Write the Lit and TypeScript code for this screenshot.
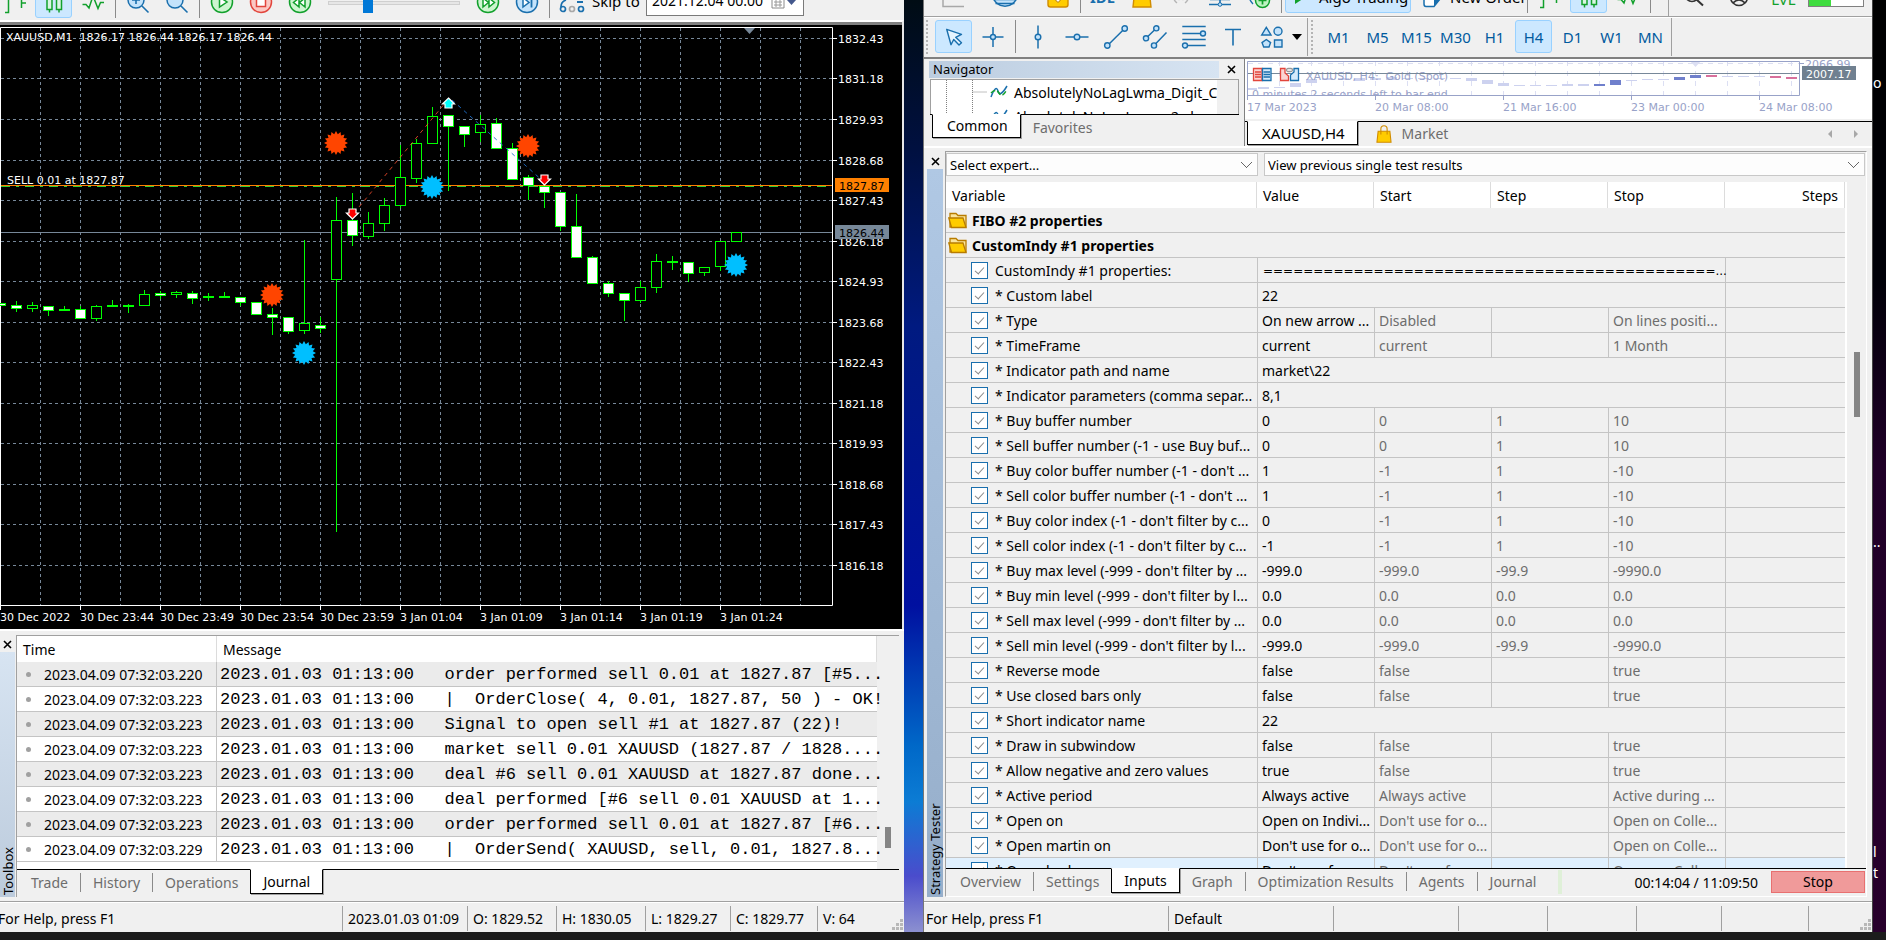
import { LitElement, html, svg, css } from "lit";
import { customElement } from "lit/decorators.js";

/* ---------- data ---------- */

type Candle = [x: number, high: number, top: number, bottom: number, low: number, kind: "w" | "h" | "l"];

const CANDLES: Candle[] = [
  [0, 303, 303, 305, 305, "w"], [16, 301, 305, 308, 311, "w"], [32, 302, 305, 308, 311, "h"],
  [48, 306, 306, 310, 315, "w"], [64, 306, 309, 310, 310, "l"], [80, 306, 309, 318, 318, "w"],
  [96, 305, 306, 318, 320, "h"], [112, 300, 305, 306, 306, "l"], [128, 304, 305, 306, 312, "l"],
  [144, 290, 294, 305, 305, "h"], [160, 291, 293, 295, 298, "w"], [176, 291, 292, 294, 297, "h"],
  [192, 291, 293, 298, 303, "w"], [208, 293, 296, 297, 300, "l"], [224, 292, 296, 297, 297, "l"],
  [240, 297, 297, 302, 305, "w"], [256, 302, 302, 314, 314, "w"], [272, 308, 314, 317, 334, "w"],
  [288, 317, 317, 331, 333, "w"], [304, 240, 323, 330, 333, "h"], [320, 317, 325, 328, 332, "w"],
  [336, 197, 220, 279, 531, "h"], [352, 193, 220, 235, 245, "w"], [368, 212, 223, 236, 238, "h"],
  [384, 198, 205, 223, 230, "h"], [400, 145, 177, 205, 207, "h"], [416, 139, 143, 178, 182, "h"],
  [432, 107, 116, 143, 143, "h"], [448, 115, 115, 126, 190, "w"], [464, 126, 126, 134, 146, "w"],
  [480, 115, 124, 132, 141, "h"], [496, 118, 123, 148, 148, "w"], [512, 143, 148, 179, 179, "w"],
  [528, 175, 177, 185, 199, "w"], [544, 186, 186, 192, 207, "w"], [560, 192, 192, 226, 230, "w"],
  [576, 194, 226, 257, 257, "w"], [592, 256, 257, 283, 283, "w"], [608, 281, 283, 293, 296, "w"],
  [624, 293, 293, 300, 320, "w"], [640, 281, 287, 300, 302, "h"], [656, 254, 261, 287, 292, "h"],
  [672, 256, 261, 262, 269, "l"], [688, 262, 262, 273, 281, "w"], [704, 267, 267, 272, 275, "h"],
  [720, 241, 241, 266, 270, "h"], [736, 232, 232, 241, 241, "h"],
];

const PRICES: [number, string][] = [
  [38, "1832.43"], [78, "1831.18"], [119, "1829.93"], [160, "1828.68"], [200, "1827.43"],
  [241, "1826.18"], [281, "1824.93"], [322, "1823.68"], [362, "1822.43"], [403, "1821.18"],
  [443, "1819.93"], [484, "1818.68"], [524, "1817.43"], [565, "1816.18"],
];

const TIMES: [number, string][] = [
  [0, "30 Dec 2022"], [80, "30 Dec 23:44"], [160, "30 Dec 23:49"], [240, "30 Dec 23:54"],
  [320, "30 Dec 23:59"], [400, "3 Jan 01:04"], [480, "3 Jan 01:09"], [560, "3 Jan 01:14"],
  [640, "3 Jan 01:19"], [720, "3 Jan 01:24"],
];

const LOG: [string, string][] = [
  ["2023.04.09 07:32:03.220", "order performed sell 0.01 at 1827.87 [#5..."],
  ["2023.04.09 07:32:03.223", "|  OrderClose( 4, 0.01, 1827.87, 50 ) - OK!"],
  ["2023.04.09 07:32:03.223", "Signal to open sell #1 at 1827.87 (22)!"],
  ["2023.04.09 07:32:03.223", "market sell 0.01 XAUUSD (1827.87 / 1828...."],
  ["2023.04.09 07:32:03.223", "deal #6 sell 0.01 XAUUSD at 1827.87 done..."],
  ["2023.04.09 07:32:03.223", "deal performed [#6 sell 0.01 XAUUSD at 1..."],
  ["2023.04.09 07:32:03.223", "order performed sell 0.01 at 1827.87 [#6..."],
  ["2023.04.09 07:32:03.229", "|  OrderSend( XAUUSD, sell, 0.01, 1827.8..."],
];

/* A row with one value spans the optimisation columns. */
const INPUTS: string[][] = [
  ["CustomIndy #1 properties:", "=".repeat(45) + "..."],
  ["* Custom label", "22"],
  ["* Type", "On new arrow ...", "Disabled", "", "On lines positi..."],
  ["* TimeFrame", "current", "current", "", "1 Month"],
  ["* Indicator path and name", "market\\22"],
  ["* Indicator parameters (comma separ...", "8,1"],
  ["* Buy buffer number", "0", "0", "1", "10"],
  ["* Sell buffer number (-1 - use Buy buf...", "0", "0", "1", "10"],
  ["* Buy color buffer number (-1 - don't ...", "1", "-1", "1", "-10"],
  ["* Sell color buffer number (-1 - don't ...", "1", "-1", "1", "-10"],
  ["* Buy color index (-1 - don't filter by c...", "0", "-1", "1", "-10"],
  ["* Sell color index (-1 - don't filter by c...", "-1", "-1", "1", "-10"],
  ["* Buy max level (-999 - don't filter by ...", "-999.0", "-999.0", "-99.9", "-9990.0"],
  ["* Buy min level (-999 - don't filter by l...", "0.0", "0.0", "0.0", "0.0"],
  ["* Sell max level (-999 - don't filter by ...", "0.0", "0.0", "0.0", "0.0"],
  ["* Sell min level (-999 - don't filter by l...", "-999.0", "-999.0", "-99.9", "-9990.0"],
  ["* Reverse mode", "false", "false", "", "true"],
  ["* Use closed bars only", "false", "false", "", "true"],
  ["* Short indicator name", "22"],
  ["* Draw in subwindow", "false", "false", "", "true"],
  ["* Allow negative and zero values", "true", "false", "", "true"],
  ["* Active period", "Always active", "Always active", "", "Active during ..."],
  ["* Open on", "Open on Indivi...", "Don't use for o...", "", "Open on Colle..."],
  ["* Open martin on", "Don't use for o...", "Don't use for o...", "", "Open on Colle..."],
  ["* Open hedge on", "Don't use for o...", "Don't use for o...", "", "Open on Colle..."],
];

/* ---------- icons, all on a 24 x 24 grid ---------- */

const B = "#1a6fad";
const L = "#c4e3fb";
const G = "#12a02c";

const ICONS: Record<string, unknown> = {
  bars: svg`<path d="M5.5 0V22.5H2M5.5 8H2M18.5 0V18M18.5 13H23" fill="none" stroke=${G} stroke-width="1.5"/>`,
  candles: svg`<path d="M7.5 0V22.5M17 0V22.5" stroke=${G} stroke-width="1.5"/><path d="M5 2H10V19.500H5ZM14.500 2H19.500V19.500H14.500Z" fill="#d9f5e2" stroke=${G} stroke-width="1.5"/>`,
  line: svg`<path d="M1.500 14.500H5L8 18L12 6L17 18.500L19.500 12.500H23" fill="none" stroke=${G} stroke-width="1.5"/>`,
  zoomin: svg`<circle cx="10" cy="10" r="8" fill=${L} stroke=${B} stroke-width="1.5"/><path d="M6 10H14M10 6V14M16 16L22.500 22.500" stroke=${B} stroke-width="1.600"/>`,
  zoomout: svg`<circle cx="10" cy="10" r="8" fill=${L} stroke=${B} stroke-width="1.5"/><path d="M6 8H14M16 16L22.500 22.500" stroke=${B} stroke-width="1.600"/>`,
  play: svg`<circle cx="12" cy="12" r="10.500" fill="#cdf5cf" stroke=${G} stroke-width="1.5"/><path d="M9.500 7L17 12L9.500 17Z" fill="#fff" stroke=${G} stroke-width="1.5"/>`,
  stop: svg`<circle cx="12" cy="12" r="10.500" fill="#fbc9c4" stroke="#e2453c" stroke-width="1.5"/><path d="M7.500 7.500H16.500V16.500H7.500Z" fill="#fff" stroke="#e2453c" stroke-width="1.5"/>`,
  rewind: svg`<circle cx="12" cy="12" r="10.500" fill="#cdf5cf" stroke=${G} stroke-width="1.5"/><path d="M11 8L5.500 12.500L11 17ZM17 8L11.500 12.500L17 17Z" fill="#fff" stroke=${G} stroke-width="1.5"/>`,
  forward: svg`<circle cx="12" cy="12" r="10.500" fill="#cdf5cf" stroke=${G} stroke-width="1.5"/><path d="M7 8L12.500 12.500L7 17ZM13 8L18.500 12.500L13 17Z" fill="#fff" stroke=${G} stroke-width="1.5"/>`,
  next: svg`<circle cx="12" cy="12" r="10.500" fill=${L} stroke=${B} stroke-width="1.5"/><path d="M8 7.500L14 12.500L8 17Z" fill="#fff" stroke=${B} stroke-width="1.5"/><path d="M16.500 7V17.500" stroke=${B} stroke-width="1.800"/>`,
  skip: svg`<g fill="none" stroke-width="1.700"><circle cx="3" cy="19" r="2.500" stroke=${B}/><circle cx="12" cy="19" r="2.500" stroke="#a8a8a8"/><circle cx="21" cy="19" r="2.500" stroke=${B}/><path d="M1 17C1 13 3 11 6 10" stroke=${B}/></g><path d="M17 12H23" stroke=${B} stroke-width="2"/>`,
  cursor: svg`<path d="M4.700 4.300L19.500 9.300L13.700 12.300L19.500 17.700L17 20L11.700 14.500L9 19.700Z" fill="#e6f4fe" stroke=${B} stroke-width="1.400" stroke-linejoin="round"/>`,
  cross: svg`<path d="M1.500 12H22.500M12 2V22" stroke=${B} stroke-width="1.500"/><circle cx="12" cy="12" r="2.500" fill=${L} stroke=${B} stroke-width="1.400"/>`,
  vline: svg`<path d="M12 .500V23.500" stroke=${B} stroke-width="1.500"/><circle cx="12" cy="12" r="2.800" fill=${L} stroke=${B} stroke-width="1.400"/>`,
  hline: svg`<path d="M.500 12H23.500" stroke=${B} stroke-width="1.500"/><circle cx="12" cy="12" r="2.800" fill=${L} stroke=${B} stroke-width="1.400"/>`,
  trend: svg`<path d="M3.300 20.700L20.700 3.500" stroke=${B} stroke-width="1.500"/><g fill=${L} stroke=${B} stroke-width="1.400"><circle cx="3.300" cy="20.500" r="2.700"/><circle cx="20.700" cy="3.500" r="2.700"/></g>`,
  channel: svg`<path d="M3 13.300L13.300 3.300M11 20.500L23.500 7.500" stroke=${B} stroke-width="1.500"/><g fill=${L} stroke=${B} stroke-width="1.400"><circle cx="3" cy="13.300" r="2.600"/><circle cx="13.300" cy="3.300" r="2.600"/><circle cx="11" cy="20.500" r="2.600"/></g>`,
  fibo: svg`<path d="M.300 1.500H23.700M.300 8.500H19M.300 14.500H23.700M5 20.500H23.700" stroke=${B} stroke-width="1.500"/><g fill=${L} stroke=${B} stroke-width="1.400"><circle cx="21" cy="8.500" r="2.500"/><circle cx="3" cy="20.500" r="2.500"/></g>`,
  text: svg`<path d="M4 4.500H20M12 4.500V20.500" stroke=${B} stroke-width="1.600"/>`,
  shapes: svg`<g fill=${L} stroke=${B} stroke-width="1.400"><path d="M6.300 2.300L1.700 10H11ZM6.300 14.500L10.600 17.600L9 22H3.700L2 17.600ZM14.500 15H22V22H14.500Z"/><circle cx="18" cy="6.300" r="4"/></g>`,
  axes: svg`<path d="M2 0V21.500H23" fill="none" stroke="#a8a8a8" stroke-width="1.500"/>`,
  globe: svg`<path d="M0 10C1 25 23 25 24 10Z" fill=${L} stroke=${B} stroke-width="1.500"/><path d="M0 14.500H24M2.500 18.500H21.500" stroke=${B} stroke-width="1.500"/>`,
  folder: svg`<rect x="2" y="1" width="20" height="21" rx="2.500" fill="#fc0" stroke="#d08c00" stroke-width="1.400"/><path d="M8.500 14L12 17.500L15.500 14Z" fill="#fff" stroke="#a87000"/>`,
  bag: svg`<path d="M4.500 8H19.500L21 22H3Z" fill="#fc0" stroke="#d08c00" stroke-width="1.400"/><path d="M8 12V5a4 4 0 0 1 8 0V12" fill="none" stroke="#d08c00" stroke-width="1.400"/>`,
  signal: svg`<path d="M4 9Q4 15 8 18M20 9Q20 15 16 18M9 10Q9 13 10.500 15M15 10Q15 13 13.500 15" fill="none" stroke="#b4b4b4" stroke-width="1.400"/>`,
  vps: svg`<path d="M2 14.500H22M1 19.500H23M12 14.500V19.500" stroke=${B} stroke-width="1.600"/><circle cx="12" cy="19.500" r="1.800" fill=${L} stroke=${B}/>`,
  add: svg`<path d="M1 8Q2 15 6 19M6 8Q7 12 9 14" fill="none" stroke=${B} stroke-width="1.400"/><circle cx="15.500" cy="15.500" r="7" fill="#bdf3c1" stroke=${G} stroke-width="1.500"/><path d="M11.500 15.500H19.500M15.500 11.500V19.500" stroke=${G} stroke-width="1.700"/>`,
  order: svg`<path d="M3 2H20V14L14 21.500H6Q4 21.500 4 19V2" fill="#fff" stroke=${B} stroke-width="1.500"/><path d="M20 14H14V21.500Z" fill=${B}/>`,
  search: svg`<circle cx="10" cy="10" r="6.500" fill="none" stroke="#333" stroke-width="1.700"/><path d="M14.500 14.500L21 20.500" stroke="#333" stroke-width="2"/>`,
  user: svg`<circle cx="12" cy="12" r="8.500" fill="none" stroke="#333" stroke-width="1.600"/><path d="M6 18Q12 12 18 18" fill="none" stroke="#333" stroke-width="1.600"/>`,
};

const icon = (name: string) =>
  html`<svg class="icon" width="24" height="24" viewBox="0 0 24 24" overflow="visible" aria-hidden="true">${ICONS[name]}</svg>`;

const tool = (name: string, label: string, on = false) =>
  html`<button class="tool ${on ? "on" : ""}" aria-label=${label}>${icon(name)}</button>`;

const sep = html`<span class="sep"></span>`;

const cross = html`<svg width="9" height="9" viewBox="0 0 9 9" aria-hidden="true"><path d="M1 1L8 8M8 1L1 8" stroke="#000" stroke-width="1.600"/></svg>`;

const sizeGrip = html`<svg class="grip" width="12" height="12" viewBox="0 0 12 12" aria-hidden="true">
  <path d="M8 0h3v3h-3zM8 4h3v3h-3zM4 4h3v3h-3zM8 8h3v3h-3zM4 8h3v3h-3zM0 8h3v3h-3z" fill="#b8b8b8"/></svg>`;

/* ---------- shared styles ---------- */

const shared = css`
  * { box-sizing: border-box; }
  :host {
    display: flex;
    flex-direction: column;
    min-width: 0;
    min-height: 0;
    overflow: hidden;
    background: #f0f0f0;
    color: #000;
    font: 14px/20px "Noto Sans", "Open Sans", sans-serif;
  }
  button { font: inherit; color: inherit; border: 0; background: none; padding: 0; }
  svg { display: block; flex: none; }
  .bar { display: flex; flex: none; overflow: hidden; }
  .bar.cut { align-items: flex-end; }
  .tool {
    flex: none;
    width: 37px;
    height: 33px;
    margin-right: 2px;
    display: flex;
    align-items: center;
    justify-content: center;
    border: 1px solid transparent;
    border-radius: 3px;
    color: #005a9e;
    font-size: 15px;
    white-space: nowrap;
  }
  .tool.on { background: #cce8ff; border-color: #99d1ff; }
  .sep { flex: none; width: 1px; height: 33px; margin: 0 3px 0 2px; background: #8a8a8a; }
  .side {
    flex: none;
    display: flex;
    flex-direction: column;
    align-items: center;
    padding-top: 3px;
  }
  .side .close { height: 15px; display: flex; align-items: center; }
  .side .strip {
    flex: 1;
    width: 16px;
    writing-mode: vertical-rl;
    transform: rotate(180deg);
    line-height: 16px;
    padding-top: 2px;
    font-size: 13px;
    white-space: nowrap;
  }
  .tabs { flex: none; display: flex; height: 28px; border-top: 1px solid #000; }
  .tab {
    position: relative;
    flex: none;
    height: 25px;
    padding: 0 12px;
    color: #6d6d6d;
    line-height: 24px;
    white-space: nowrap;
  }
  .tab.line { border-right: 1px solid #8a8a8a; height: 19px; margin-top: 3px; line-height: 18px; }
  .tab.flat { height: 19px; margin-top: 3px; line-height: 18px; }
  .tab.sel {
    margin-top: -1px;
    background: #fff;
    color: #000;
    border: 1px solid #000;
    border-top-color: #fff;
    box-shadow: 1px 1px 0 #a0a0a0;
  }
  .tab:first-child { padding-left: 14px; }
  .status {
    flex: none;
    display: flex;
    height: 31px;
    padding-top: 4px;
    border-top: 1px solid #a0a0a0;
    box-shadow: inset 0 1px 0 #fff;
    line-height: 26px;
    white-space: nowrap;
  }
  .status span { flex: none; height: 25px; padding-left: 5px; border-left: 1px solid #a0a0a0; }
  .status .help { flex: 1; padding-left: 2px; border: 0; }
  .status .grip { align-self: flex-end; margin-left: auto; margin-bottom: 1px; }
  table { border-collapse: separate; border-spacing: 0; table-layout: fixed; width: 100%; }
  th { font-weight: 400; text-align: left; background: #fff; height: 26px; padding: 0; white-space: nowrap; border-right: 1px solid #dcdcdc; }
  td { height: 25px; padding: 1px 0 0; white-space: nowrap; border-bottom: 1px solid #c4c4c4; }
`;

/* ---------- price chart ---------- */

@customElement("price-chart")
class PriceChart extends LitElement {
  static styles = css`
    :host { display: block; background: #000; overflow: hidden; }
    svg { display: block; width: 100%; height: 100%; }
    text { font: 11px "DejaVu Sans", sans-serif; fill: #fff; white-space: pre; }
    .dark { fill: #000; }
    .grid { stroke: #778899; stroke-dasharray: 3 3; }
    .up { fill: #000; stroke: #0f0; }
    .down { fill: #fff; stroke: #0f0; }
    .wick { stroke: #0f0; }
  `;

  private star(cx: number, cy: number, fill: string) {
    const pts = Array.from({ length: 32 }, (_, i) => {
      const r = i % 2 ? 9 : 12;
      const a = (i * Math.PI) / 16;
      return `${(cx + r * Math.sin(a)).toFixed(1)},${(cy + r * Math.cos(a)).toFixed(1)}`;
    });
    return svg`<polygon points=${pts.join(" ")} fill=${fill}/>`;
  }

  private candle([x, high, top, bottom, low, kind]: Candle) {
    return svg`
      <path class="wick" d="M${x + 0.5} ${high}V${low + 1}"/>
      ${kind === "l"
        ? svg`<rect x=${x - 5} y=${top} width="11" height="2" fill="#0f0"/>`
        : svg`<rect class=${kind === "h" ? "up" : "down"} x=${x - 4.5} y=${top + 0.5} width="10" height=${bottom - top}/>`}`;
  }

  /* Drawing units keep the window's own vertical coordinates; the view starts 25 below its top. */
  render() {
    return html`<svg role="img" aria-label="XAUUSD one minute chart"><g transform="translate(0 -25)">
      ${PRICES.map(([y]) => svg`<path class="grid" d="M1 ${y + 0.5}H832"/><path d="M832 ${y + 0.5}h5" stroke="#fff"/>`)}
      ${Array.from({ length: 20 }, (_, i) => svg`<path class="grid" d="M${i * 40 + 40.5} 28V605"/>`)}
      <path d="M.5 605V27.500H832.500V605.500H0" fill="none" stroke="#fff"/>
      <path d="M744 28h11l-5.500 6z" fill="#778899"/>
      <path d="M1 232.500H832" stroke="#778899"/>
      <path d="M1 186.500H832" stroke="#32cd32" stroke-dasharray="9 6 3 6"/>
      <path d="M1 185.500H832" stroke="#ff8000"/>
      ${CANDLES.map((c) => this.candle(c))}
      <path d="M354 213L446 102" stroke="#ff5030" stroke-dasharray="4 4" opacity=".8"/>
      <path d="M452 100L544 182" stroke="#1e6fc8" stroke-dasharray="4 4" opacity=".9"/>
      ${this.star(336, 143, "#ff4500")}${this.star(272, 295, "#ff4500")}${this.star(528, 146, "#ff4500")}
      ${this.star(432, 187, "#00bfff")}${this.star(304, 353, "#00bfff")}${this.star(736, 265, "#00bfff")}
      <path d="M448.500 98l6 6h-2.500v4h-7v-4h-2.500z" fill="#0ff" stroke="#fff" stroke-width="1.200"/>
      <path d="M352.500 219l-6-6h2.500v-4h7v4h2.500z" fill="red" stroke="#fff" stroke-width="1.200"/>
      <path d="M544.500 185l-6-6h2.500v-4h7v4h2.500z" fill="red" stroke="#fff" stroke-width="1.200"/>
      <text x="6" y="41">XAUUSD,M1  1826.17 1826.44 1826.17 1826.44</text>
      <text x="7" y="184">SELL 0.01 at 1827.87</text>
      ${PRICES.map(([y, t]) => svg`<text x="838" y=${y + 5}>${t}</text>`)}
      ${TIMES.map(([x, t]) => svg`<path d="M${x + 0.5} 605v5" stroke="#fff"/><text x=${x} y="621">${t}</text>`)}
      <path d="M835 178h54v14h-54z" fill="#ff8000"/><text class="dark" x="839" y="190">1827.87</text>
      <path d="M835 225h54v14h-54z" fill="#778899"/><text class="dark" x="839" y="237">1826.44</text>
    </g></svg>`;
  }
}

/* ---------- visual tester window ---------- */

@customElement("visual-window")
class VisualWindow extends LitElement {
  static styles = [shared, css`
    .bar { height: 20px; padding: 0 0 2px 0; }
    .bar .tool:first-child { margin-left: -4px; }
    .chart { flex: 1; min-height: 0; border-top: 2px solid #fff; border-right: 2px solid #e8e8e8; display: flex; }
    price-chart { flex: 1; border-top: 3px solid #808080; }
    input[type="range"] {
      flex: none; width: 132px; height: 33px; margin: 0 9px 0 8px; background: none; appearance: none; align-self: flex-end;
    }
    input[type="range"]::-webkit-slider-runnable-track { height: 4px; margin-top: 2px; background: #e6e6e6; border: 1px solid #cfcfcf; }
    input[type="range"]::-webkit-slider-thumb { appearance: none; width: 10px; height: 20px; margin-top: -9px; background: #0078d7; }
    .skip { display: flex; flex: none; align-items: flex-end; font-size: 15px; line-height: 20px; }
    .skip label { width: 54px; height: 27px; }
    .date { display: flex; align-items: center; width: 158px; height: 32px; margin: 0 0 2px; border: 1px solid #7a7a7a; background: #fff; }
    .date input { width: 124px; height: 30px; padding: 0 0 0 5px; border: 0; background: none; font: inherit; font-size: 14px; outline: 0; }
    .lower { flex: none; display: flex; height: 272px; padding: 3px 5px 4px 0; border-top: 2px solid #fff; }
    .side { width: 16px; align-items: flex-start; }
    .side .close { margin-left: 3px; }
    .side .strip { width: 15px; background: linear-gradient(to top, #d7e4f2, #bccbdc); }
    .panel { flex: 1; display: flex; flex-direction: column; min-width: 0; margin-top: 1px; border: 1px solid #a0a0a0; border-width: 1px 0 0 1px; }
    .list { flex: 1; min-height: 0; display: flex; }
    .rows { flex: 1; background: #fff; }
    .track { width: 22px; padding: 191px 0 0 8px; }
    .thumb { width: 6px; height: 21px; background: #858585; }
    .time { width: 200px; }
    tr:nth-child(odd) td { background: #ebebeb; }
    th { padding: 2px 6px 0; }
    td:first-child { border-right: 1px solid #c4c4c4; padding-left: 9px; }
    td:last-child { padding-left: 3px; white-space: pre; font: 17px/20px "Liberation Mono", monospace; }
    .dot { display: inline-block; width: 5px; height: 5px; margin-right: 13px; border-radius: 3px; background: #a0a0a0; vertical-align: 3px; }
    .status .help { padding-left: 0; margin-left: -2px; }
    .w1 { width: 125px; } .w2 { width: 89px; } .w3 { width: 85px; } .w4 { width: 87px; } .w5 { width: 75px; }
  `];

  render() {
    return html`
      <div class="bar cut">
        ${tool("bars", "Bar chart")}${tool("candles", "Candlesticks", true)}${tool("line", "Line chart")}${sep}
        ${tool("zoomin", "Zoom in")}${tool("zoomout", "Zoom out")}${sep}
        ${tool("play", "Play")}${tool("stop", "Stop")}${tool("rewind", "Slower")}
        <input type="range" min="0" max="100" value="28" aria-label="Speed">
        ${tool("forward", "Faster")}${tool("next", "Next bar")}${sep}${tool("skip", "Skip")}
        <div class="skip"><label for="date">Skip to</label>
          <div class="date"><input id="date" value="2021.12.04 00:00">
            <svg width="26" height="24" viewBox="0 0 26 24" aria-hidden="true"><path d="M1 3h12v17H1z" fill="#fff" stroke="#8a8a8a"/><path d="M3 17h8M3 14h8M3 11h8M5 8v11M9 8v11" stroke="#9a9a9a"/><path d="M16 12h9l-4.500 5z" fill="#44588c"/></svg>
          </div></div>
      </div>
      <div class="chart"><price-chart></price-chart></div>
      <div class="lower">
        <div class="side"><button class="close" aria-label="Close">${cross}</button><div class="strip">Toolbox</div></div>
        <div class="panel">
          <div class="list">
            <div class="rows"><table>
              <colgroup><col class="time"><col></colgroup>
              <thead><tr><th>Time</th><th>Message</th></tr></thead>
              <tbody>${LOG.map(([t, m]) => html`<tr><td><span class="dot"></span>${t}</td><td>${"2023.01.03 01:13:00   " + m}</td></tr>`)}</tbody>
            </table></div>
            <div class="track"><div class="thumb"></div></div>
          </div>
          <div class="tabs">
            <button class="tab line">Trade</button><button class="tab line">History</button>
            <button class="tab flat">Operations</button><button class="tab sel">Journal</button>
          </div>
        </div>
      </div>
      <div class="status">
        <span class="help">For Help, press F1</span><span class="w1">2023.01.03 01:09</span><span class="w2">O: 1829.52</span>
        <span class="w2">H: 1830.05</span><span class="w3">L: 1829.27</span><span class="w4">C: 1829.77</span><span class="w5">V: 64</span>${sizeGrip}
      </div>`;
  }
}

/* ---------- small gold chart ---------- */

const MINI: [number, number, number, string][] = [
  [6, 29, 2, "p"], [18, 28, 2, "p"], [34, 28, 1, "p"], [50, 24, 4, "p"], [66, 20, 4, "p"], [82, 19, 2, "p"],
  [98, 19, 2, "p"], [114, 19, 3, "p"], [130, 19, 2, "p"], [146, 18, 3, "p"], [162, 19, 1, "p"], [178, 19, 1, "p"],
  [194, 19, 1, "p"], [210, 19, 1, "p"], [226, 19, 3, "p"], [242, 21, 4, "p"], [258, 24, 3, "p"], [274, 26, 1, "p"],
  [290, 26, 1, "p"], [306, 26, 1, "p"], [322, 25, 2, "p"], [338, 25, 2, "p"], [354, 25, 2, "b"], [370, 21, 5, "b"],
  [386, 21, 1, "p"], [402, 20, 1, "p"], [418, 20, 1, "p"], [434, 18, 3, "b"], [450, 16, 3, "b"], [466, 16, 2, "r"],
  [482, 17, 1, "p"], [498, 17, 1, "p"], [514, 17, 1, "p"], [530, 17, 2, "r"], [546, 18, 2, "r"],
];

const MINI_DATES: [number, string][] = [
  [2, "17 Mar 2023"], [130, "20 Mar 08:00"], [258, "21 Mar 16:00"], [386, "23 Mar 00:00"], [514, "24 Mar 08:00"],
];

@customElement("mini-chart")
class MiniChart extends LitElement {
  static styles = css`
    :host { display: block; background: #fff; overflow: hidden; }
    svg { display: block; width: 100%; height: 100%; }
    text { font: 11px "DejaVu Sans", sans-serif; fill: #98a2c8; white-space: pre; }
    .tag { fill: #fff; }
    .p { fill: #cdd2ef; } .b { fill: #7080cc; } .r { fill: #d8709c; }
    .grid { stroke: #dcdff3; stroke-dasharray: 5 5; }
    .frame { fill: none; stroke: #98a2c8; }
  `;
  render() {
    return html`<svg role="img" aria-label="XAUUSD four hour chart">
      <clipPath id="plot"><rect x="2" y="2" width="553" height="34"/></clipPath>
      <path class="grid" d="M3 4.500H555"/>
      ${Array.from({ length: 17 }, (_, i) => svg`<path class="grid" d="M${i * 32 + 34.5} 2V36"/>`)}
      <g clip-path="url(#plot)">
        ${MINI.map(([x, y, h, c]) => svg`<rect class=${c} x=${x - 5} y=${y} width="11" height=${h}/>`)}
        <path d="M445 2h11l-5.500 6z" fill="#dcdff3"/>
        <text x="61" y="21">XAUUSD, H4:  Gold (Spot)</text>
        <text x="7" y="39">0 minutes 2 seconds left to bar end</text>
      </g>
      <path d="M2 14.500H555" stroke="#778899"/>
      <path class="frame" d="M2.500 36.500V2.500H554.500V36.500H2"/>
      ${MINI_DATES.map(([x, t]) => svg`<path class="frame" d="M${x + 0.5} 36v5"/><text x=${x} y="52">${t}</text>`)}
      <path class="frame" d="M555 4.500h4"/>
      <text x="560" y="9">2066.99</text>
      <path d="M557 7h54v14h-54z" fill="#708090"/><text class="tag" x="561" y="19">2007.17</text>
      <g transform="translate(8 9)" stroke-width="1.300">
        <path d="M.5.5H9V12.500H.5Z" fill="#fbd5d2" stroke="#e2453c"/><path d="M9.500.5H18V12.500H9.500Z" fill="#d5eafb" stroke="#1a6fad"/>
        <path d="M2 4H8M2 6.500H8M2 9H8" stroke="#e2453c"/><path d="M10.500 4H17M10.500 6.500H17M10.500 9H17" stroke="#1a6fad"/>
      </g>
      <g transform="translate(35 9)" stroke-width="1.300">
        <path d="M.5.500V12.500H8.500V8L5 5V.5Z" fill="#fbd5d2" stroke="#e2453c"/><path d="M18.500.5V12.500H10.500V7L14 4V.5Z" fill="#d5eafb" stroke="#1a6fad"/>
        <rect x="6.500" y=".5" width="6" height="3" rx="1.500" fill="#fff" stroke="#999"/>
      </g>
    </svg>`;
  }
}

/* ---------- main terminal window ---------- */

@customElement("terminal-window")
class TerminalWindow extends LitElement {
  static styles = [shared, css`
    .top { height: 16px; }
    .top .tool, .top .sep { margin-bottom: 3px; }
    .top .first { margin-left: 10px; margin-right: 15px; }
    .top .gap { margin-right: 16px; }
    .top .wide { width: 126px; justify-content: flex-start; padding-left: 8px; color: #000; gap: 13px; }
    .top .new { width: 110px; justify-content: flex-start; padding-left: 6px; color: #000; gap: 6px; }
    .ide { color: #1a6fad; font-weight: 700; }
    .end { display: flex; flex: 1; align-items: flex-end; justify-content: flex-end; margin-left: 14px; border-left: 1px solid #a0a0a0; padding-right: 8px; gap: 6px; }
    .lvl { flex: none; width: 37px; margin-bottom: 8px; color: #12a02c; font-size: 15px; line-height: 18px; text-align: center; }
    .battery { flex: none; width: 56px; height: 14px; margin-bottom: 9px; border: 1px solid #808080; background: linear-gradient(to right, #3fdc3f 40%, #fff 40%); }
    .draw { height: 41px; padding: 3px 0 0 2px; align-items: flex-start; border-top: 1px solid #a0a0a0; box-shadow: inset 0 1px 0 #fff; }
    .handle { flex: none; width: 2px; height: 36px; margin: 0 7px 0 0; background: repeating-linear-gradient(#b4b4b4 0 2px, transparent 2px 4px); }
    .caret { flex: none; border: 5px solid transparent; border-top: 6px solid #000; margin: 14px 5px 0 0; }
    .edge { flex: none; width: 1px; height: 38px; background: #a0a0a0; margin: -2px 3px 0 0; }
    .mid { flex: none; display: flex; height: 89px; border-top: 2px solid #808080; }
    .nav { flex: none; width: 318px; padding: 2px 2px 0 5px; }
    .title { display: flex; align-items: center; height: 17px; padding-right: 4px; font-size: 13px; line-height: 17px; }
    .title b { flex: 1; font-weight: 400; padding-left: 4px; margin-right: 8px; background: linear-gradient(to right, #bccde0, #d7e4f2); }
    .tree { height: 35px; margin: 1px 1px 0; border: 1px solid #a0a0a0; border-bottom: 0; overflow: hidden; line-height: 25px; display: flex; }
    .tree .items { flex: 1; min-width: 0; overflow: hidden; background: #fff; }
    .tree .bar2 { width: 21px; }
    .item { display: flex; align-items: center; height: 24px; white-space: nowrap; gap: 5px; padding-left: 14px; }
    .mid .tab { line-height: 22px; height: 24px; }
    .mid .tab.flat { line-height: 18px; height: 19px; }
    .nav .tabs { margin: 0 1px; padding-left: 2px; }
    .view { flex: 1; min-width: 0; display: flex; flex-direction: column; margin-left: 2px; border-left: 1px solid #808080; }
    mini-chart { height: 60px; flex: none; }
    .view .tabs { height: 26px; margin-top: 2px; padding-left: 2px; font-size: 15px; }
    .market { display: flex; align-items: center; gap: 10px; height: 24px; padding: 0 18px; color: #6d6d6d; font-size: 14px; }
    .arrows { margin: 8px 14px 0 auto; }
    .tester { flex: 1; min-height: 0; display: flex; padding: 3px 5px 4px 3px; border-top: 2px solid #fff; }
    .side { width: 18px; align-items: flex-start; }
    .side .close { margin-left: 4px; }
    .side .strip { background: linear-gradient(to top, #b0c8e4, #96aeca); }
    .panel { flex: 1; display: flex; flex-direction: column; min-width: 0; border: 1px solid #a0a0a0; border-right-color: #fff; border-bottom-color: #fff; }
    .choose { flex: none; display: flex; gap: 6px; padding: 1px 1px 6px 0; }
    select {
      height: 23px; min-width: 0; border: 1px solid #c8c8c8; background-color: #fdfdfd; color: #000; appearance: none;
      background-image: linear-gradient(45deg, transparent 46%, #666 46% 56%, transparent 56%), linear-gradient(-45deg, transparent 46%, #666 46% 56%, transparent 56%);
      background-size: 6px 6px; background-repeat: no-repeat; background-position: right 10px top 8px, right 5px top 8px;
      font: 13px/20px "Noto Sans", sans-serif; padding: 0 3px; border-radius: 0;
    }
    .expert { flex: none; width: 312px; }
    .result { flex: 1; }
    .list { flex: 1; min-height: 0; display: flex; overflow: hidden; }
    .rows { flex: 1; overflow: hidden; height: 100%; }
    .track { width: 21px; padding: 170px 0 0 7px; border-left: 2px solid #fff; }
    .thumb { width: 6px; height: 65px; background: #858585; }
    .cv { width: 117px; } .cs { width: 120px; }
    th { padding: 1px 6px 0; }
    th:last-child { text-align: right; }
    td { padding-left: 4px; color: #6d6d6d; }
    td + td { border-left: 1px solid #c4c4c4; }
    td:nth-child(-n+2) { color: #000; }
    td label { display: flex; align-items: center; gap: 7px; padding-left: 21px; }
    td input {
      flex: none; appearance: none; width: 17px; height: 17px; margin: 0; border: 1px solid #1a6fad; background: #fff;
      display: grid; place-items: center;
    }
    td input::before { content: ""; width: 4px; height: 8px; margin-top: -3px; border: solid #8a8a8a; border-width: 0 1px 1px 0; transform: rotate(42deg); }
    .group { font-weight: 700; color: #000; padding-left: 2px; }
    .group div { display: flex; align-items: center; gap: 4px; }
    .rule { font-family: "DejaVu Sans", sans-serif; font-size: 12px; padding-left: 5px; }
    .hot td { background: #e0f0fe; }
    .tabs .mark { width: 4px; height: 24px; margin: 1px 0 0 10px; background: #dff0d8; }
    .clock { margin-left: auto; line-height: 27px; }
    .halt { width: 94px; height: 22px; margin: 2px 1px 0 13px; border: 1px solid #e87070; background: #f09a9a; line-height: 20px; }
    .d1 { width: 165px; } .d2 { width: 125px; } .d3 { width: 89px; } .d4 { width: 85px; } .d5 { width: 87px; }
    .d6 { width: 64px; }
    .status .grip { margin-left: -12px; }
  `];

  private leaf = html`<svg width="64" height="24" viewBox="0 0 64 24" aria-hidden="true">
    <path d="M1.500 0V24M27.500 0V24M27.500 12H42" stroke="#808080" stroke-dasharray="1 1" fill="none"/>
    <path d="M46 17Q51 4 53 11T62 6" fill="none" stroke="#1a6fad" stroke-width="1.500"/>
    <path d="M46 13Q51 8 54 13T61 11" fill="none" stroke="#12a02c" stroke-width="1.500" stroke-dasharray="5 2"/></svg>`;

  private folder = html`<svg width="20" height="17" viewBox="0 0 20 17" aria-hidden="true">
    <path d="M2 15V1.500H8L10 3.500H18V15Z" fill="#fbe49a" stroke="#b87c00" stroke-width="1.300"/>
    <path d="M.800 6H15L18 15.500H3.500Z" fill="#fc0" stroke="#b87c00" stroke-width="1.300"/></svg>`;

  private row(cells: string[], i: number) {
    const [name, value, ...rest] = cells;
    const id = `in${i}`;
    return html`<tr class=${i === INPUTS.length - 1 ? "hot" : ""}>
      <td><label for=${id}><input type="checkbox" id=${id} checked>${name}</label></td>
      ${rest.length
        ? html`<td>${value}</td>${rest.map((c) => html`<td>${c}</td>`)}`
        : html`<td colspan="4" class=${i === 0 ? "rule" : ""}>${value}</td>`}
      <td></td></tr>`;
  }

  render() {
    return html`
      <div class="bar cut top">
        <button class="tool first" aria-label="New chart">${icon("axes")}</button>
        <button class="tool gap" aria-label="Market watch">${icon("globe")}</button>
        ${tool("folder", "Data window")}${sep}
        <button class="tool ide">IDE</button>${tool("bag", "Market")}${tool("signal", "Signals")}${tool("vps", "Hosting")}${tool("add", "Copy")}${sep}
        <button class="tool wide on">
          <svg width="12" height="24" viewBox="0 0 12 24" aria-hidden="true"><path d="M1 6L11 12.500L1 19Z" fill="#12a02c"/></svg>Algo Trading</button>
        <button class="tool new">${icon("order")}New Order</button>${sep}
        ${tool("bars", "Bars")}${tool("candles", "Candles", true)}${tool("line", "Line")}${sep}
        <div class="end">${tool("search", "Search")}${tool("user", "Account")}<span class="lvl">LVL</span><span class="battery"></span></div>
      </div>
      <div class="bar draw">
        <span class="handle"></span>
        ${tool("cursor", "Cursor", true)}${tool("cross", "Crosshair")}${sep}${tool("vline", "Vertical line")}${tool("hline", "Horizontal line")}
        ${tool("trend", "Trend line")}${tool("channel", "Channel")}${tool("fibo", "Fibonacci")}${tool("text", "Text")}${tool("shapes", "Shapes")}
        <span class="caret"></span><span class="edge"></span><span class="handle"></span>
        ${["M1", "M5", "M15", "M30", "H1", "H4", "D1", "W1", "MN"].map((t) => html`<button class="tool ${t === "H4" ? "on" : ""}">${t}</button>`)}
        <span class="edge"></span>
      </div>
      <div class="mid">
        <div class="nav">
          <div class="title"><b>Navigator</b><button aria-label="Close navigator">${cross}</button></div>
          <div class="tree"><div class="items">
            <div class="item">${this.leaf}AbsolutelyNoLagLwma_Digit_C</div>
            <div class="item">${this.leaf}AbsolutelyNoLagLwma_2_d</div>
          </div><div class="bar2"></div></div>
          <div class="tabs"><button class="tab sel">Common</button><button class="tab flat">Favorites</button></div>
        </div>
        <div class="view">
          <mini-chart></mini-chart>
          <div class="tabs">
            <button class="tab sel">XAUUSD,H4</button>
            <button class="market"><svg width="16" height="18" viewBox="2 0 20 23" aria-hidden="true">${ICONS.bag}</svg>Market</button>
            <svg class="arrows" width="30" height="8" viewBox="0 0 30 8" aria-hidden="true"><path d="M4 0V8L0 4ZM26 0V8L30 4Z" fill="#a8a8a8"/></svg>
          </div>
        </div>
      </div>
      <div class="tester">
        <div class="side"><button class="close" aria-label="Close tester">${cross}</button><div class="strip">Strategy Tester</div></div>
        <div class="panel">
          <div class="choose">
            <select class="expert" aria-label="Expert"><option>Select expert...</option></select>
            <select class="result" aria-label="Results"><option>View previous single test results</option></select>
          </div>
          <div class="list">
            <div class="rows"><table>
              <colgroup><col><col class="cv"><col class="cv"><col class="cv"><col class="cv"><col class="cs"></colgroup>
              <thead><tr>${["Variable", "Value", "Start", "Step", "Stop", "Steps"].map((h) => html`<th>${h}</th>`)}</tr></thead>
              <tbody>
                ${["FIBO #2 properties", "CustomIndy #1 properties"].map((g) => html`<tr><td class="group" colspan="6"><div>${this.folder}${g}</div></td></tr>`)}
                ${INPUTS.map((r, i) => this.row(r, i))}
              </tbody>
            </table></div>
            <div class="track"><div class="thumb"></div></div>
          </div>
          <div class="tabs">
            <button class="tab line">Overview</button><button class="tab flat">Settings</button><button class="tab sel">Inputs</button>
            <button class="tab line">Graph</button><button class="tab line">Optimization Results</button><button class="tab line">Agents</button>
            <button class="tab flat">Journal</button><span class="mark"></span><span class="clock">00:14:04 / 11:09:50</span>
            <button class="halt">Stop</button>
          </div>
        </div>
      </div>
      <div class="status">
        <span class="help">For Help, press F1</span><span class="d1">Default</span><span class="d2"></span><span class="d3"></span>
        <span class="d3"></span><span class="d4"></span><span class="d5"></span><span class="d6"></span>${sizeGrip}
      </div>`;
  }
}

/* ---------- desktop ---------- */

@customElement("app-root")
class AppRoot extends LitElement {
  static styles = css`
    :host {
      display: grid;
      grid-template: minmax(0, 1fr) 8px / minmax(0, 904fr) 20px minmax(0, 948fr) 14px;
      height: 100vh;
      background: #1c1c1c;
      overflow: hidden;
      font: 14px/20px "Noto Sans", sans-serif;
    }
    .wall { background: linear-gradient(#000c14 0, #001040 16%, #001a80 35%, #0010a0 65%, #0068c8 80%, #0c7cd4 86%, #4a4ccc 94%, #8c90d0 100%); border-right: 1px solid #777; }
    .edge { position: relative; overflow: hidden; border-left: 1px solid #444; color: #fff; background: linear-gradient(#000 0, #000008 30%, #200028 50%, #28002c 100%); }
    .edge span { position: absolute; left: 0; }
    .n1 { top: 73px; } .n2 { top: 532px; } .n3 { top: 842px; } .n4 { top: 863px; }
  `;
  render() {
    return html`
      <visual-window></visual-window>
      <div class="wall"></div>
      <terminal-window></terminal-window>
      <div class="edge"><span class="n1">o</span><span class="n2">..</span><span class="n3">l</span><span class="n4">t</span></div>`;
  }
}
